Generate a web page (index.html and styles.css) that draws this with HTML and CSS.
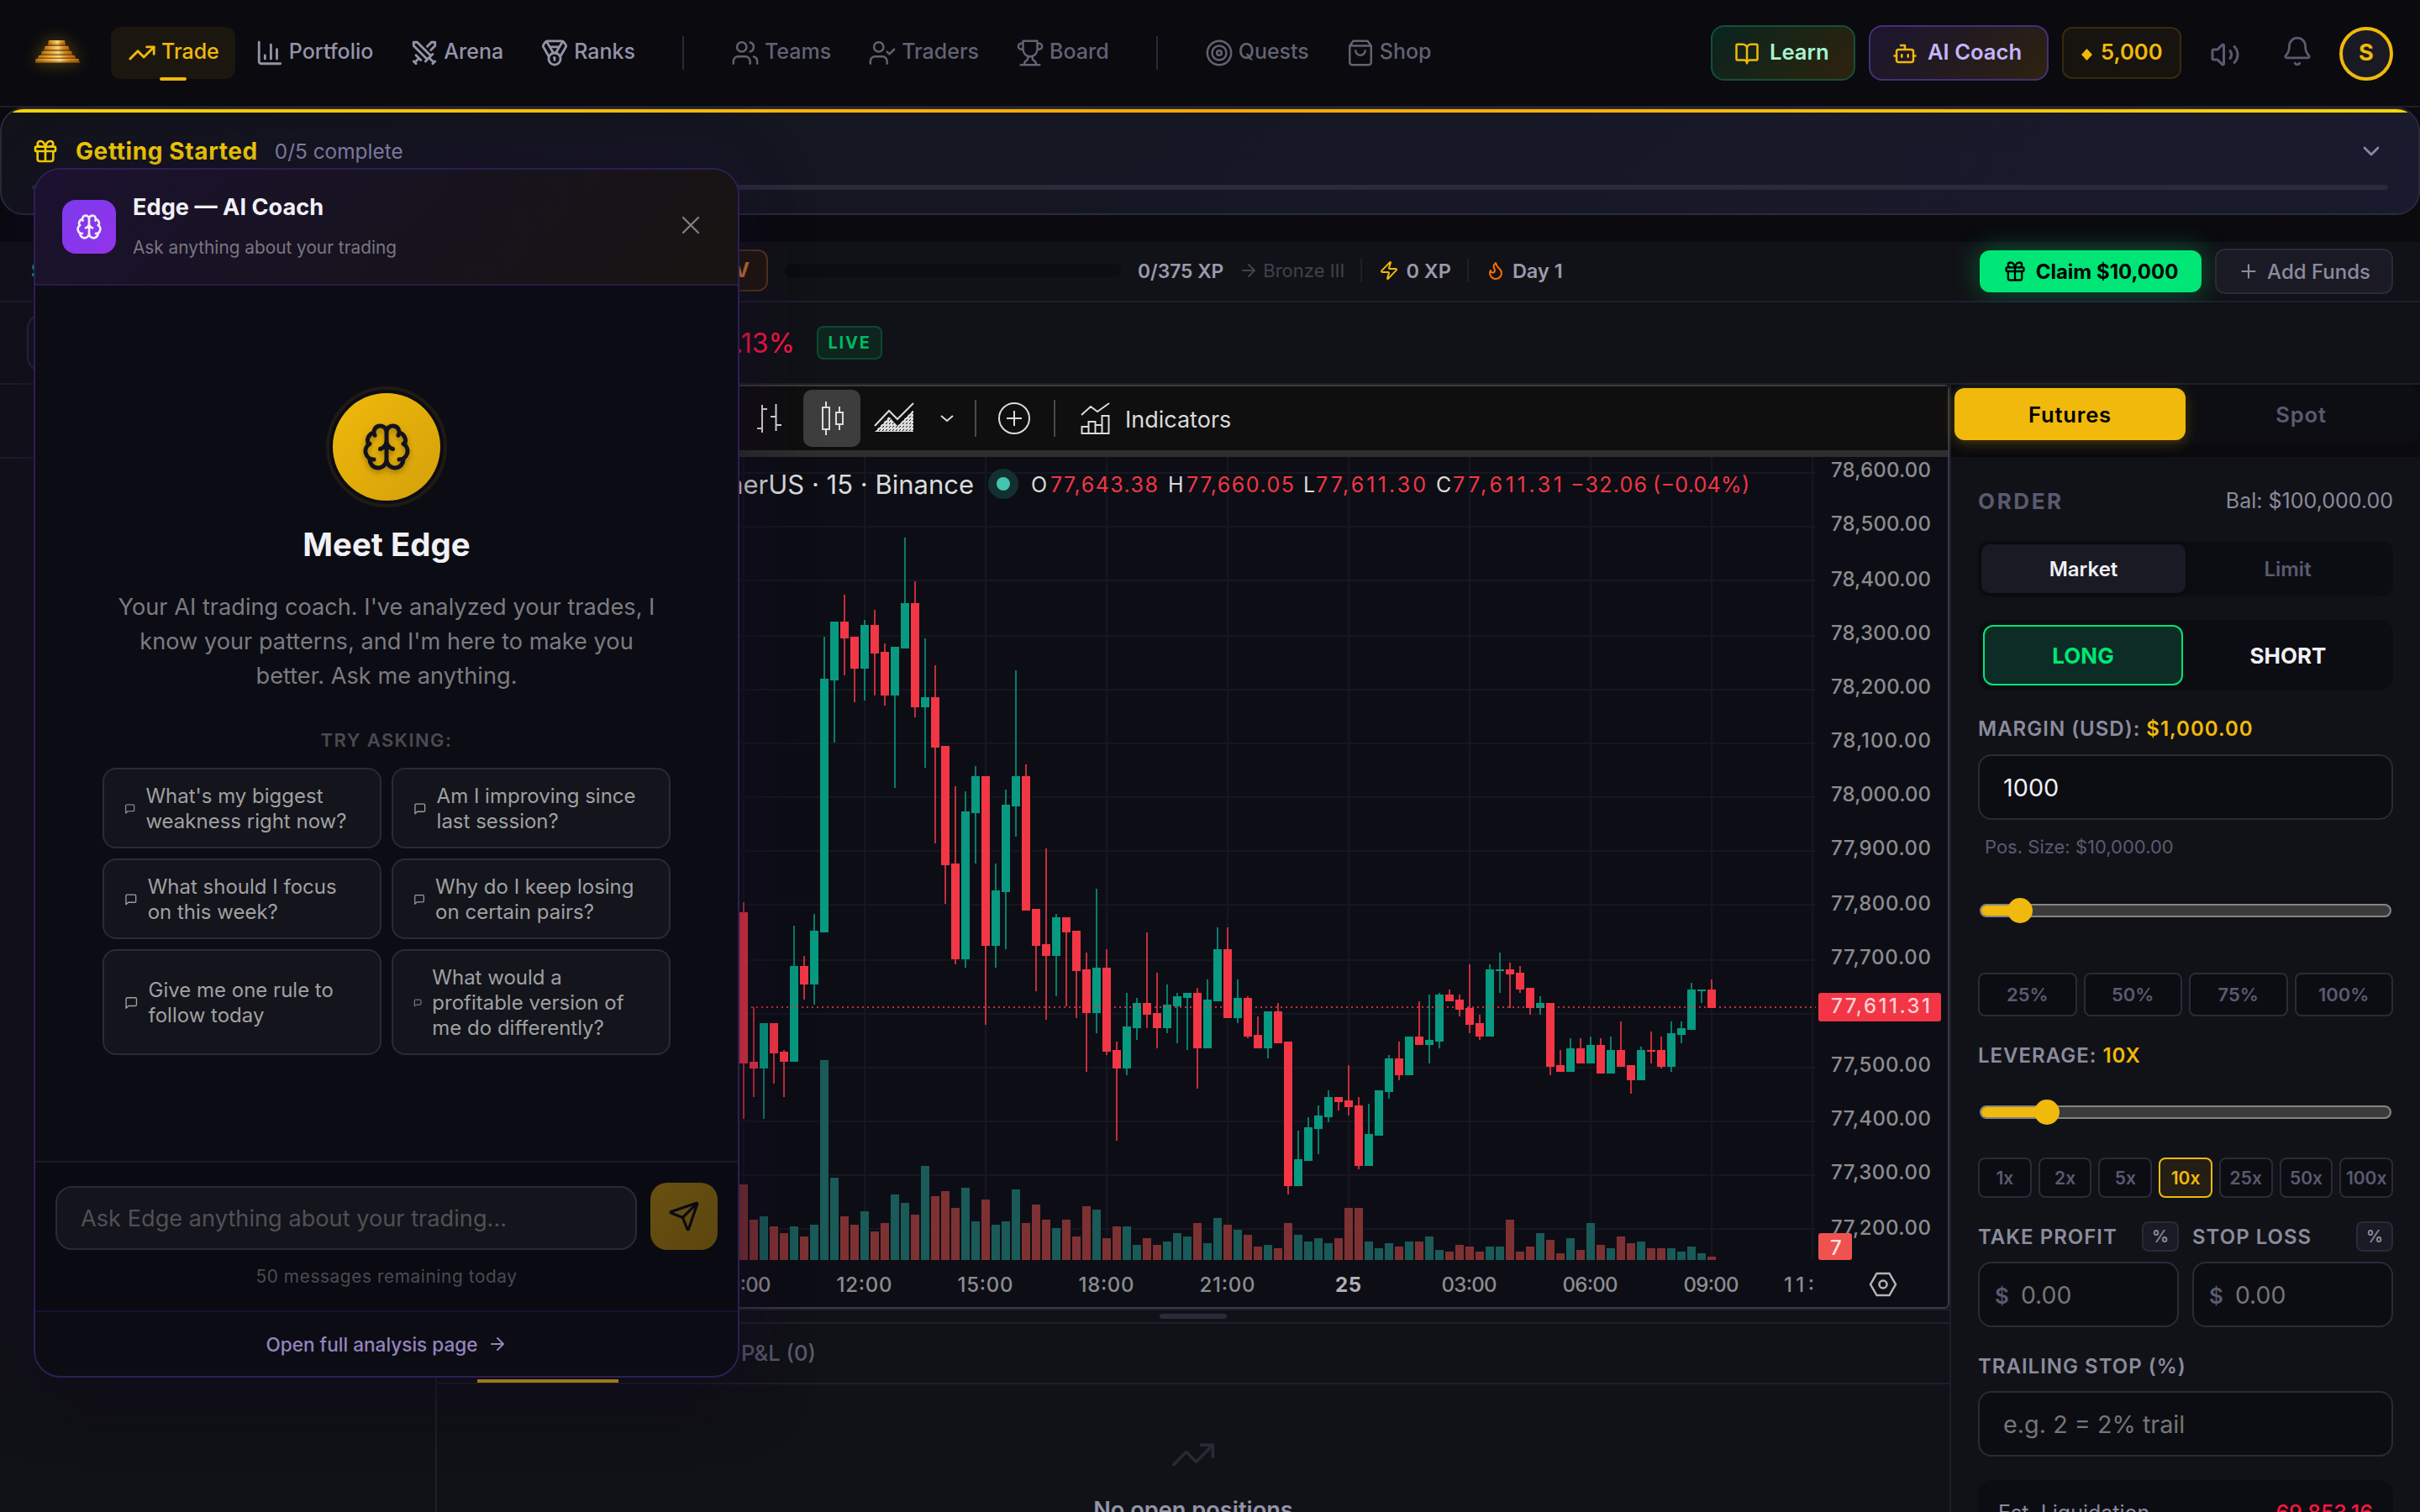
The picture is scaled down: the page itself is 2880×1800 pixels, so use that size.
FILE: index.html
```html
<!DOCTYPE html>
<html lang="en">
<head>
  <meta charset="UTF-8" />
  <meta name="viewport" content="width=device-width, initial-scale=1.0"/>
  <title>Trade</title>
  <link rel="stylesheet" href="styles.css">
</head>
<body>

  <!-- Icon set -->
  <svg class="icon-defs" width="0" height="0">
    <symbol id="i-trend" viewBox="0 0 24 24"><path d="M22 7l-8.5 8.5-5-5L2 17"/><path d="M16 7h6v6"/></symbol>
    <symbol id="i-bars" viewBox="0 0 24 24"><path d="M3 3v16a2 2 0 0 0 2 2h16"/><path d="M18 17V9M13 17V5M8 17v-3"/></symbol>
    <symbol id="i-swords" viewBox="0 0 24 24"><path d="M14.5 17.5L3 6V3h3l11.5 11.5M13 19l6-6M16 16l4 4M19 21l2-2M14.5 6.5L18 3h3v3l-3.5 3.5M5 14l4 4M7 17l-3 3M3 19l2 2"/></symbol>
    <symbol id="i-medal" viewBox="0 0 24 24"><path d="M7.21 15 2.66 7.14a2 2 0 0 1 .13-2.2L4.4 2.8A2 2 0 0 1 6 2h12a2 2 0 0 1 1.6.8l1.6 2.14a2 2 0 0 1 .14 2.2L16.79 15"/><path d="M11 12 5.12 2.2M13 12l5.88-9.8M8 7h8"/><circle cx="12" cy="17" r="5"/><path d="M12 18v-2h-.5"/></symbol>
    <symbol id="i-users" viewBox="0 0 24 24"><path d="M16 21v-2a4 4 0 0 0-4-4H6a4 4 0 0 0-4 4v2"/><circle cx="9" cy="7" r="4"/><path d="M22 21v-2a4 4 0 0 0-3-3.87M16 3.13a4 4 0 0 1 0 7.75"/></symbol>
    <symbol id="i-usercheck" viewBox="0 0 24 24"><path d="M16 21v-2a4 4 0 0 0-4-4H6a4 4 0 0 0-4 4v2"/><circle cx="9" cy="7" r="4"/><path d="M16 11l2 2 4-4"/></symbol>
    <symbol id="i-trophy" viewBox="0 0 24 24"><path d="M6 9H4.5a2.5 2.5 0 0 1 0-5H6M18 9h1.5a2.5 2.5 0 0 0 0-5H18M4 22h16M10 14.66V17c0 .55-.47.98-.97 1.21C7.85 18.75 7 20.24 7 22M14 14.66V17c0 .55.47.98.97 1.21C16.15 18.75 17 20.24 17 22M18 2H6v7a6 6 0 0 0 12 0V2Z"/></symbol>
    <symbol id="i-target" viewBox="0 0 24 24"><circle cx="12" cy="12" r="10"/><circle cx="12" cy="12" r="6"/><circle cx="12" cy="12" r="2"/></symbol>
    <symbol id="i-bag" viewBox="0 0 24 24"><path d="M6 2 3 6v14a2 2 0 0 0 2 2h14a2 2 0 0 0 2-2V6l-3-4ZM3 6h18M16 10a4 4 0 0 1-8 0"/></symbol>
    <symbol id="i-book" viewBox="0 0 24 24"><path d="M12 7v14M3 18a1 1 0 0 1-1-1V4a1 1 0 0 1 1-1h5a4 4 0 0 1 4 4 4 4 0 0 1 4-4h5a1 1 0 0 1 1 1v13a1 1 0 0 1-1 1h-6a3 3 0 0 0-3 3 3 3 0 0 0-3-3z"/></symbol>
    <symbol id="i-bot" viewBox="0 0 24 24"><path d="M12 8V4H8"/><rect x="4" y="8" width="16" height="12" rx="2"/><path d="M2 14h2M20 14h2M15 13v2M9 13v2"/></symbol>
    <symbol id="i-volume" viewBox="0 0 24 24"><path d="M11 4.702a.705.705 0 0 0-1.203-.498L6.413 7.587A1.4 1.4 0 0 1 5.416 8H3a1 1 0 0 0-1 1v6a1 1 0 0 0 1 1h2.416a1.4 1.4 0 0 1 .997.413l3.383 3.384A.705.705 0 0 0 11 19.298zM16 9a5 5 0 0 1 0 6M19.364 18.364a9 9 0 0 0 0-12.728"/></symbol>
    <symbol id="i-bell" viewBox="0 0 24 24"><path d="M10.268 21a2 2 0 0 0 3.464 0M3.262 15.326A1 1 0 0 0 4 17h16a1 1 0 0 0 .74-1.673C19.41 13.956 18 12.499 18 8A6 6 0 0 0 6 8c0 4.499-1.411 5.956-2.738 7.326"/></symbol>
    <symbol id="i-gift" viewBox="0 0 24 24"><rect x="3" y="8" width="18" height="4" rx="1"/><path d="M12 8v13M19 12v7a2 2 0 0 1-2 2H7a2 2 0 0 1-2-2v-7M7.5 8a2.5 2.5 0 0 1 0-5A4.8 8 0 0 1 12 8a4.8 8 0 0 1 4.5-5 2.5 2.5 0 0 1 0 5"/></symbol>
    <symbol id="i-brain" viewBox="0 0 24 24"><path d="M12 18V5M15 13a4.17 4.17 0 0 1-3-4 4.17 4.17 0 0 1-3 4M17.598 6.5A3 3 0 1 0 12 5a3 3 0 1 0-5.598 1.5M17.997 5.125a4 4 0 0 1 2.526 5.77M18 18a4 4 0 0 0 2-7.464M19.967 17.483A4 4 0 1 1 12 18a4 4 0 1 1-7.967-.517M6 18a4 4 0 0 1-2-7.464M6.003 5.125a4 4 0 0 0-2.526 5.77"/></symbol>
    <symbol id="i-msg" viewBox="0 0 24 24"><path d="M21 15a2 2 0 0 1-2 2H7l-4 4V5a2 2 0 0 1 2-2h14a2 2 0 0 1 2 2z"/></symbol>
    <symbol id="i-send" viewBox="0 0 24 24"><path d="M14.536 21.686a.5.5 0 0 0 .937-.024l6.5-19a.496.496 0 0 0-.635-.635l-19 6.5a.5.5 0 0 0-.024.937l7.93 3.18a2 2 0 0 1 1.112 1.11zM21.854 2.147l-10.94 10.939"/></symbol>
    <symbol id="i-zap" viewBox="0 0 24 24"><path d="M4 14a1 1 0 0 1-.78-1.63l9.9-10.2a.5.5 0 0 1 .86.46l-1.92 6.02A1 1 0 0 0 13 10h7a1 1 0 0 1 .78 1.63l-9.9 10.2a.5.5 0 0 1-.86-.46l1.92-6.02A1 1 0 0 0 11 14z"/></symbol>
    <symbol id="i-flame" viewBox="0 0 24 24"><path d="M8.5 14.5A2.5 2.5 0 0 0 11 12c0-1.38-.5-2-1-3-1.072-2.143-.224-4.054 2-6 .5 2.5 2 4.9 4 6.5 2 1.6 3 3.5 3 5.5a7 7 0 1 1-14 0c0-1.153.433-2.294 1-3a2.5 2.5 0 0 0 2.5 2.5z"/></symbol>
    <symbol id="i-x" viewBox="0 0 24 24"><path d="M18 6 6 18M6 6l12 12"/></symbol>
    <symbol id="i-plus" viewBox="0 0 24 24"><path d="M5 12h14M12 5v14"/></symbol>
    <symbol id="i-down" viewBox="0 0 24 24"><path d="M6 9l6 6 6-6"/></symbol>
    <symbol id="i-right" viewBox="0 0 24 24"><path d="M5 12h14M12 5l7 7-7 7"/></symbol>
  </svg>

  <!-- Top navigation -->
  <header class="top-nav">
    <a class="logo" href="#">
      <svg width="56" height="32" viewBox="0 0 56 32">
        <defs>
          <linearGradient id="gold" x1="0" y1="0" x2="1" y2="0">
            <stop offset="0" stop-color="#a86508"/><stop offset=".3" stop-color="#f0a92c"/>
            <stop offset=".55" stop-color="#ffdf86"/><stop offset=".75" stop-color="#d88a1a"/><stop offset="1" stop-color="#a05a08"/>
          </linearGradient>
          <linearGradient id="shade" x1="0" y1="0" x2="0" y2="1">
            <stop offset="0" stop-color="#ffe9a0" stop-opacity=".3"/><stop offset=".4" stop-color="#6b3504" stop-opacity="0"/>
            <stop offset="1" stop-color="#4a2202" stop-opacity=".75"/>
          </linearGradient>
        </defs>
        <g fill="url(#gold)">
          <path d="M18 1h19l1.500 7h-22z"/><path d="M13.500 8h28l1.500 6h-31z"/><path d="M10 14h35l1.500 5h-38z"/><path d="M6 19h43l1.500 4h-46z"/><path d="M2.500 23h51l1.500 5H2z"/>
        </g>
        <g fill="url(#shade)">
          <path d="M18 1h19l1.500 7h-22z"/><path d="M13.500 8h28l1.500 6h-31z"/><path d="M10 14h35l1.500 5h-38z"/><path d="M6 19h43l1.500 4h-46z"/><path d="M2.500 23h51l1.500 5H2z"/>
        </g>
      </svg>
    </a>
    <nav class="nav-links">
      <a class="nav-item active"><svg class="icon"><use href="#i-trend"/></svg><span>Trade</span></a>
      <a class="nav-item"><svg class="icon"><use href="#i-bars"/></svg><span>Portfolio</span></a>
      <a class="nav-item"><svg class="icon"><use href="#i-swords"/></svg><span>Arena</span></a>
      <a class="nav-item"><svg class="icon"><use href="#i-medal"/></svg><span>Ranks</span></a>
      <i class="nav-sep"></i>
      <a class="nav-item dim"><svg class="icon"><use href="#i-users"/></svg><span>Teams</span></a>
      <a class="nav-item dim"><svg class="icon"><use href="#i-usercheck"/></svg><span>Traders</span></a>
      <a class="nav-item dim"><svg class="icon"><use href="#i-trophy"/></svg><span>Board</span></a>
      <i class="nav-sep"></i>
      <a class="nav-item dim"><svg class="icon"><use href="#i-target"/></svg><span>Quests</span></a>
      <a class="nav-item dim"><svg class="icon"><use href="#i-bag"/></svg><span>Shop</span></a>
    </nav>
    <div class="nav-right">
      <button class="pill learn"><svg class="icon"><use href="#i-book"/></svg><span>Learn</span></button>
      <button class="pill coach"><svg class="icon"><use href="#i-bot"/></svg><span>AI Coach</span></button>
      <button class="coins"><i class="gem"></i><span>5,000</span></button>
      <svg class="icon volume"><use href="#i-volume"/></svg>
      <svg class="icon bell"><use href="#i-bell"/></svg>
      <div class="avatar">S</div>
    </div>
  </header>

  <!-- Onboarding banner -->
  <section class="getting-started">
    <div class="gs-row">
      <svg class="icon"><use href="#i-gift"/></svg>
      <h2>Getting Started</h2>
      <span>0/5 complete</span>
      <svg class="icon chevron"><use href="#i-down"/></svg>
    </div>
    <div class="gs-progress"></div>
  </section>

  <!-- Account status -->
  <section class="status-bar">
    <span class="balance">$100,000.00</span>
    <span class="rank">BRONZE IV</span>
    <span class="xp-bar"></span>
    <b class="xp">0/375 XP</b>
    <span class="next"><svg class="icon"><use href="#i-right"/></svg>Bronze III</span>
    <span class="stat zap"><svg class="icon"><use href="#i-zap"/></svg>0 XP</span>
    <span class="stat day"><svg class="icon"><use href="#i-flame"/></svg>Day 1</span>
    <div class="fund-btns">
      <button class="claim"><svg class="icon"><use href="#i-gift"/></svg>Claim $10,000</button>
      <button class="add"><svg class="icon"><use href="#i-plus"/></svg>Add Funds</button>
    </div>
  </section>

  <section class="ticker">
    <div class="pair"></div>
    <span class="change">-1.13%</span>
    <span class="live">LIVE</span>
  </section>

  <main class="workspace">
    <aside class="left-panel"><div class="left-head"></div></aside>

    <section class="center">
      <div class="chart">
        <div class="toolbar">
          <button class="tool"><svg width="40" height="40" viewBox="896 479 40 40"><path d="M907 483v33M907 488h6M901 511h6M923.500 482v32M917 497h6.500M923.500 507h6.500"/></svg></button>
          <button class="tool on"><svg width="40" height="40" viewBox="970 478 40 40"><path d="M979 485h8v26h-8zM983 478v7M983 511v7M995 491h8v14h-8zM999 484v7M999 505v7"/></svg></button>
          <button class="tool">
            <svg width="50" height="40" viewBox="1040 478 50 40">
              <defs><pattern id="hatch" width="4" height="4" patternUnits="userSpaceOnUse"><rect width="2" height="2" fill="#c8c8c8"/><rect x="2" y="2" width="2" height="2" fill="#c8c8c8"/></pattern></defs>
              <path d="M1042 507l17-18 10 10 19-19"/><path class="fill" d="M1042 514l17-18 10 11 19-19v26z"/>
            </svg>
          </button>
          <svg class="more" width="20" height="20" viewBox="0 0 20 20"><path d="M3 7l7 6 7-6"/></svg>
          <i class="tool-sep"></i>
          <svg class="compare" width="40" height="40" viewBox="0 0 40 40"><circle cx="20" cy="20" r="18"/><path d="M11 20h18M20 11v18"/></svg>
          <i class="tool-sep"></i>
          <svg class="ind" width="36" height="40" viewBox="1285 478 36 40"><path d="M1287 494l11-10 8 6 14-10M1287.500 508h8v8h-8zM1295.500 502h8v14h-8zM1303.500 506h8v10h-8zM1311.500 495h8v21h-8z"/></svg>
          <span class="ind-label">Indicators</span>
        </div>
        <svg id="plot" class="plot" viewBox="522 544 1796 1012"></svg>
      </div>
      <div class="resizer"><i></i></div>
      <div class="tabs">
        <span class="tab active">Positions (0)</span>
        <span class="tab">P&amp;L (0)</span>
      </div>
      <div class="empty">
        <svg class="icon"><use href="#i-trend"/></svg>
        <p>No open positions</p>
      </div>
    </section>

    <!-- Order form -->
    <aside class="order-panel">
      <div class="market-type"><div>
        <button class="on">Futures</button><button>Spot</button>
      </div></div>
      <div class="order-form">
        <div class="order-head"><h3>ORDER</h3><span>Bal: $100,000.00</span></div>
        <div class="order-type"><button class="on">Market</button><button>Limit</button></div>
        <div class="side"><button class="long">LONG</button><button>SHORT</button></div>
        <label class="field-label margin-label">MARGIN (USD): <b>$1,000.00</b></label>
        <div class="field">1000</div>
        <p class="pos-size">Pos. Size: $10,000.00</p>
        <div class="slider margin-slider"><i style="width:48px"></i></div>
        <div class="pct"><button>25%</button><button>50%</button><button>75%</button><button>100%</button></div>
        <label class="field-label lev-label">LEVERAGE: <b>10X</b></label>
        <div class="slider lev-slider"><i style="width:80px"></i></div>
        <div class="lev"><button>1x</button><button>2x</button><button>5x</button><button class="on">10x</button><button>25x</button><button>50x</button><button>100x</button></div>
        <div class="tpsl">
          <div>
            <div class="tpsl-head"><label class="field-label">TAKE PROFIT</label><button>%</button></div>
            <div class="field price"><b>$</b>0.00</div>
          </div>
          <div>
            <div class="tpsl-head"><label class="field-label">STOP LOSS</label><button>%</button></div>
            <div class="field price"><b>$</b>0.00</div>
          </div>
        </div>
        <label class="field-label trail-label">TRAILING STOP (%)</label>
        <div class="field hint">e.g. 2 = 2% trail</div>
        <div class="summary"><span>Est. Liquidation</span><b>69,853.16</b></div>
      </div>
    </aside>
  </main>

  <!-- AI coach popup -->
  <div class="coach-modal">
    <div class="coach-head">
      <div class="coach-icon"><svg class="icon"><use href="#i-brain"/></svg></div>
      <div class="coach-title"><h2>Edge — AI Coach</h2><p>Ask anything about your trading</p></div>
      <svg class="icon close"><use href="#i-x"/></svg>
    </div>
    <div class="coach-body">
      <div class="orb"><svg class="icon"><use href="#i-brain"/></svg></div>
      <h1>Meet Edge</h1>
      <p class="intro">Your AI trading coach. I've analyzed your trades, I know your patterns, and I'm here to make you better. Ask me anything.</p>
      <p class="try">TRY ASKING:</p>
      <div class="prompts">
        <button><svg class="icon"><use href="#i-msg"/></svg><span>What's my biggest weakness right now?</span></button>
        <button><svg class="icon"><use href="#i-msg"/></svg><span>Am I improving since last session?</span></button>
        <button><svg class="icon"><use href="#i-msg"/></svg><span>What should I focus on this week?</span></button>
        <button><svg class="icon"><use href="#i-msg"/></svg><span>Why do I keep losing on certain pairs?</span></button>
        <button><svg class="icon"><use href="#i-msg"/></svg><span>Give me one rule to follow today</span></button>
        <button><svg class="icon"><use href="#i-msg"/></svg><span>What would a profitable version of me do differently?</span></button>
      </div>
    </div>
    <div class="coach-input">
      <div class="ask-row">
        <div class="ask">Ask Edge anything about your trading...</div>
        <button class="send"><svg class="icon"><use href="#i-send"/></svg></button>
      </div>
      <p>50 messages remaining today</p>
    </div>
    <a class="coach-link">Open full analysis page <svg class="icon"><use href="#i-right"/></svg></a>
  </div>

  <script src="chart.js"></script>
</body>
</html>
```

FILE: styles.css
```css
* {
  box-sizing: border-box;
  margin: 0;
  padding: 0;
}

body {
  position: relative;
  width: 2880px;
  height: 1800px;
  overflow: hidden;
  display: flex;
  flex-direction: column;
  font-family: Inter, sans-serif;
  background: #0a0a0f;
  color: #f0f0f5;
}

button {
  font: inherit;
  color: inherit;
  background: none;
  border: none;
}

.icon-defs { position: absolute; }

.icon {
  width: 34px;
  height: 34px;
  flex-shrink: 0;
  fill: none;
  stroke: currentColor;
  stroke-width: 2;
  stroke-linecap: round;
  stroke-linejoin: round;
}

/* ===== TOP NAV ===== */
.top-nav {
  height: 128px;
  flex-shrink: 0;
  display: flex;
  align-items: center;
  padding: 0 32px 0 40px;
  border-bottom: 2px solid #1e1e2e;
}

.logo {
  width: 92px;
  height: 32px;
}

.logo svg { filter: drop-shadow(0 0 10px rgba(240, 185, 11, 0.35)); }

.nav-links {
  display: flex;
  align-items: center;
  gap: 4px;
}

.nav-item {
  position: relative;
  display: flex;
  align-items: center;
  gap: 6px;
  height: 62px;
  padding: 0 20px;
  border-radius: 12px;
  font-size: 25px;
  font-weight: 500;
  color: #9494a8;
}

.nav-item span, .pill span, .coins span { padding-bottom: 4px; }

.nav-item.dim { color: #626272; }
.nav-item.dim .icon { stroke-width: 1.75; }

.nav-item.active {
  padding-right: 19px;
  color: #f0b90b;
  background: #1b170f;
}

.nav-item.active::after {
  content: "";
  position: absolute;
  left: 58px;
  bottom: -2px;
  width: 32px;
  height: 4px;
  border-radius: 2px;
  background: #f0b90b;
}

.nav-sep {
  width: 2px;
  height: 40px;
  margin: 0 32px;
  background: #2a2a3a;
}

.nav-right {
  margin-left: auto;
  display: flex;
  align-items: center;
}

.pill {
  display: flex;
  align-items: center;
  height: 66px;
  padding: 0 26px;
  border: 2px solid;
  border-radius: 16px;
  font-size: 25.6px;
  font-weight: 600;
  margin-right: 16px;
}

.pill .icon {
  width: 30px;
  height: 30px;
  margin-right: 12px;
  margin-top: 2px;
  color: #f0b90b;
}

.learn {
  width: 172px;
  color: #a7f3d0;
  border-color: #145038;
  background: linear-gradient(135deg, #0a2420, #1f2412 60%, #30210f);
}

.coach {
  width: 214px;
  color: #c4b5fd;
  border-color: #43307a;
  background: linear-gradient(135deg, #1c1530, #231b1f 50%, #2f2210);
}

.coins {
  display: flex;
  align-items: center;
  width: 142px;
  height: 62px;
  padding-left: 21px;
  border: 2px solid #352b10;
  border-radius: 12px;
  background: #17130e;
  font-size: 25.6px;
  font-weight: 600;
  color: #f0b90b;
}

.gem {
  width: 13px;
  height: 14px;
  margin: 4px 10px 0 0;
  background: #f0b90b;
  clip-path: polygon(50% 0, 100% 50%, 50% 100%, 0 50%);
}

.volume {
  width: 36px;
  height: 36px;
  margin: 4px 0 0 34px;
  color: #5a5a70;
}

.bell {
  width: 38px;
  height: 38px;
  margin: -4px 0 0 49px;
  color: #5a5a70;
  stroke-width: 1.75;
}

.avatar {
  width: 64px;
  height: 64px;
  margin: 2px 0 0 31px;
  border: 4px solid #f0b90b;
  border-radius: 50%;
  background: #1a1a24;
  color: #f0b90b;
  font-size: 27.2px;
  font-weight: 700;
  line-height: 54px;
  text-align: center;
}

/* ===== GETTING STARTED ===== */
.getting-started {
  position: relative;
  height: 128px;
  flex-shrink: 0;
  margin-bottom: 32px;
  padding: 34px 36px 0;
  border: 2px solid #2a2a3a;
  border-radius: 28px;
  overflow: hidden;
  background: linear-gradient(135deg, #12141a, #1a1a2e);
}

.getting-started::before {
  content: "";
  position: absolute;
  left: 0;
  top: 0;
  right: 0;
  height: 4px;
  background: linear-gradient(90deg, #ffd700, #ffa500, #ffd700);
}

.gs-row {
  display: flex;
  align-items: center;
  height: 32px;
  color: #ffd700;
}

.gs-row .icon {
  width: 32px;
  height: 32px;
  margin-right: 20px;
}

.gs-row h2 {
  font-size: 28px;
  font-weight: 700;
  letter-spacing: 0.6px;
}

.gs-row span {
  margin-left: 20px;
  font-size: 24.4px;
  color: #8888aa;
}

.gs-row .chevron {
  margin: 0 4px 0 auto;
  color: #8888aa;
}

.gs-progress {
  height: 6px;
  margin-top: 24px;
  border-radius: 3px;
  background: #2a2a3a;
}

/* ===== STATUS BAR ===== */
.status-bar {
  height: 72px;
  flex-shrink: 0;
  display: flex;
  align-items: center;
  padding: 0 32px 2px 37px;
  border-bottom: 2px solid #1e1e2e;
  background: #111217;
  font-size: 24px;
}

.balance {
  width: 679px;
  font-weight: 600;
  color: #00e676;
}

.rank {
  width: 198px;
  height: 50px;
  padding-right: 20px;
  border: 2px solid #54351c;
  border-radius: 12px;
  background: #21170f;
  color: #cd7f32;
  font-weight: 700;
  line-height: 45px;
  text-align: right;
}

.xp-bar {
  width: 400px;
  height: 16px;
  margin: 0 20px 0 20px;
  border-radius: 8px;
  background: #0c0d11;
}

.xp, .stat {
  font-weight: 600;
  color: #9a9aae;
}

.xp { font-size: 22.8px; }

.next {
  display: flex;
  align-items: center;
  margin-left: 18px;
  font-size: 22px;
  color: #41414f;
}

.next .icon {
  width: 24px;
  height: 24px;
  margin-right: 5px;
}

.stat {
  display: flex;
  align-items: center;
  height: 28px;
  margin-left: 19px;
  padding-left: 20px;
  border-left: 2px solid #1e1e2e;
  font-size: 23.500px;
}

.stat .icon {
  width: 24px;
  height: 24px;
  margin-right: 8px;
}

.zap .icon { color: #f0b90b; }
.day .icon { color: #ff6d00; }

.fund-btns {
  margin-left: auto;
  display: flex;
  align-items: center;
  gap: 16px;
}

.claim, .add {
  display: flex;
  align-items: center;
  justify-content: center;
}

.claim {
  width: 264px;
  height: 50px;
  margin-top: 2px;
  border-radius: 12px;
  background: #00e676;
  color: #000;
  font-weight: 700;
  box-shadow: 0 0 32px rgba(0, 230, 118, 0.35);
}

.claim .icon {
  width: 28px;
  height: 28px;
  margin-right: 11px;
}

.add {
  width: 212px;
  height: 54px;
  margin-top: 2px;
  border: 2px solid #2a2a3a;
  border-radius: 12px;
  background: #1a1a24;
  color: #8b8b9e;
  font-weight: 500;
}

.add .icon {
  width: 26px;
  height: 26px;
  margin-right: 9px;
}

/* ===== TICKER ===== */
.ticker {
  height: 98px;
  flex-shrink: 0;
  display: flex;
  align-items: center;
  padding-left: 32px;
  border-bottom: 2px solid #1e1e2e;
  background: #111217;
}

.pair {
  width: 420px;
  height: 72px;
  border: 2px solid #2a2a3a;
  border-radius: 20px;
  background: #15151d;
}

.change {
  width: 494px;
  text-align: right;
  font-size: 32px;
  color: #ff1744;
}

.live {
  margin-left: 26px;
  width: 78px;
  height: 40px;
  border: 2px solid #0d4a31;
  border-radius: 8px;
  background: #0e241f;
  color: #00b862;
  font-size: 20px;
  font-weight: 700;
  letter-spacing: 1.8px;
  line-height: 36px;
  text-align: center;
}

/* ===== WORKSPACE ===== */
.workspace {
  display: flex;
  height: 1342px;
}

.left-panel {
  width: 520px;
  border-right: 2px solid #1e1e2e;
  background: #111217;
}

.left-head {
  height: 88px;
  border-bottom: 2px solid #1e1e2e;
}

.center {
  width: 1800px;
  background: #111217;
}

.chart {
  height: 1100px;
  border: 2px solid #3a3a3c;
  border-radius: 0 6px 6px 0;
  background: #0d0e15;
}

.toolbar {
  display: flex;
  align-items: center;
  height: 84px;
  padding-left: 360px;
  border-bottom: 8px solid #2e2e2e;
  background: #0f0f0f;
}

.toolbar svg {
  fill: none;
  stroke: #dbdbdb;
  stroke-width: 2;
}

.toolbar .fill {
  fill: url(#hatch);
  stroke: none;
}

.tool {
  display: flex;
  align-items: center;
  justify-content: center;
  width: 68px;
  height: 68px;
  margin-right: 6px;
  border-radius: 10px;
}

.tool.on { background: #3d3d3d; }

.more { margin: 0 23px 0 13px; }

.tool-sep {
  width: 2px;
  height: 44px;
  background: #4a4a4a;
}

.compare { margin: 0 27px 0 25px; }
.ind { margin: 0 18px 0 29px; }

.ind-label {
  padding-top: 3px;
  font-size: 27px;
  color: #dbdbdb;
}

.plot {
  display: block;
  width: 1796px;
  height: 1012px;
  font-family: Inter, sans-serif;
}

.plot .grid { stroke: #15161f; stroke-width: 2; }
.plot .up { fill: #089981; }
.plot .down { fill: #f23645; }
.plot .vol.up { fill: #1a5a58; }
.plot .vol.down { fill: #7e3133; }
.plot .axis { fill: #8c8c90; font-size: 24px; font-weight: 500; }
.plot .axis.day { font-weight: 700; fill: #b0b0b4; }
.plot .name { fill: #dbdbdb; font-size: 31px; }
.plot .key { fill: #dbdbdb; font-size: 25px; }
.plot .val { fill: #f23645; font-size: 25px; }

.resizer {
  height: 18px;
  padding-top: 4px;
  border-top: 2px solid #1e1e2e;
  border-bottom: 2px solid #1e1e2e;
}

.resizer i {
  display: block;
  width: 80px;
  height: 6px;
  margin: 0 auto;
  border-radius: 3px;
  background: #2a2a3a;
}

.tabs {
  display: flex;
  height: 72px;
  padding-left: 48px;
  border-bottom: 2px solid #1e1e2e;
}

.tab {
  margin-right: 146px;
  font-size: 25.6px;
  font-weight: 500;
  line-height: 70px;
  color: #5a5a70;
}

.tab.active {
  width: 168px;
  border-bottom: 4px solid #f0b90b;
  color: #f0b90b;
  font-size: 24px;
  white-space: nowrap;
}

.empty {
  padding-top: 56px;
  text-align: center;
}

.empty .icon {
  width: 56px;
  height: 56px;
  color: #2a2a36;
  stroke-width: 1.5;
}

.empty p {
  margin-top: 17px;
  font-size: 27.2px;
  font-weight: 600;
  color: #9494a8;
}

/* ===== ORDER PANEL ===== */
.order-panel {
  width: 560px;
  border-left: 2px solid #1e1e2e;
  background: #111217;
}

.market-type {
  height: 86px;
  background: #0a0a0f;
}

.market-type div {
  display: flex;
  height: 70px;
  padding: 4px;
  border-radius: 16px;
  background: #0d0e13;
}

.market-type button {
  flex: 1;
  border-radius: 12px;
  font-size: 25.6px;
  font-weight: 600;
  letter-spacing: 0.8px;
  color: #5a5a70;
}

.market-type .on {
  background: #f0b90b;
  color: #000;
  box-shadow: 0 4px 16px rgba(240, 185, 11, 0.25);
}

.order-form { padding: 32px 32px 0; }

.order-head {
  display: flex;
  align-items: center;
  justify-content: space-between;
  height: 40px;
  font-size: 25px;
  color: #8b8b9e;
}

.order-head h3 {
  font-size: 26px;
  font-weight: 700;
  letter-spacing: 2.6px;
  color: #5a5a70;
}

.order-type, .side {
  display: flex;
  margin-top: 28px;
  background: #0c0d12;
}

.order-type {
  height: 66px;
  padding: 4px;
  border-radius: 14px;
}

.order-type button {
  flex: 1;
  border-radius: 10px;
  font-size: 24px;
  font-weight: 600;
  color: #5a5a70;
}

.order-type .on {
  background: #1a1a24;
  color: #f0f0f5;
  box-shadow: 0 2px 8px rgba(0, 0, 0, 0.3);
}

.side {
  gap: 6px;
  height: 84px;
  padding: 6px;
  border-radius: 16px;
}

.side button {
  flex: 1;
  border: 2px solid transparent;
  border-radius: 12px;
  font-size: 26px;
  font-weight: 700;
}

.side .long {
  border-color: #00e676;
  background: #0d2c25;
  color: #00e676;
}

.field-label {
  display: block;
  height: 28px;
  font-size: 24px;
  font-weight: 600;
  line-height: 29px;
  letter-spacing: 1px;
  color: #8b8b9e;
}

.field-label b {
  font-weight: 600;
  color: #f0b90b;
}

.margin-label { margin-top: 31px; }
.lev-label { margin-top: 32px; }
.trail-label { margin-top: 32px; }

.field {
  height: 78px;
  margin-top: 17px;
  padding-left: 28px;
  border: 2px solid #2a2a3a;
  border-radius: 16px;
  background: #0c0d12;
  font-size: 28.8px;
  line-height: 75px;
}

.pos-size {
  height: 24px;
  margin: 20px 0 0 8px;
  font-size: 22px;
  line-height: 24px;
  color: #5a5a70;
}

.slider {
  height: 16px;
  margin: 0 2px;
  border: 2px solid #858585;
  border-radius: 8px;
  background: #3b3b3b;
}

.slider i {
  position: relative;
  display: block;
  height: 12px;
  border-radius: 6px;
  background: #f0b90b;
}

.slider i::after {
  content: "";
  position: absolute;
  right: -13px;
  top: -9px;
  width: 30px;
  height: 30px;
  border-radius: 50%;
  background: #f0b90b;
}

.margin-slider { margin-top: 56px; }
.lev-slider { margin-top: 46px; }

.pct, .lev {
  display: flex;
  gap: 8px;
}

.pct { margin-top: 66px; }
.lev { margin-top: 46px; }

.pct button, .lev button {
  flex: 1 1 0;
  min-width: 0;
  height: 52px;
  border: 2px solid #2a2a3a;
  border-radius: 8px;
  background: #0c0d12;
  color: #5a5a70;
  font-size: 22px;
  font-weight: 600;
}

.lev button {
  height: 48px;
  font-size: 21px;
}

.lev .on {
  border-color: #f0b90b;
  background: #241e14;
  color: #f0b90b;
}

.tpsl {
  display: flex;
  gap: 16px;
  margin-top: 28px;
}

.tpsl > div { flex: 1; }

.tpsl-head {
  display: flex;
  align-items: center;
  justify-content: space-between;
  height: 36px;
}

.tpsl-head button {
  width: 44px;
  height: 36px;
  border: 2px solid #2a2a3a;
  border-radius: 8px;
  background: #1a1a24;
  color: #8b8b9e;
  font-size: 20px;
  font-weight: 600;
}

.price {
  margin-top: 12px;
  padding-left: 18px;
  color: #757575;
  font-size: 28.4px;
}

.price b {
  margin-right: 14px;
  font-size: 26px;
  font-weight: 600;
  color: #5a5a70;
}

.trail-label + .field { margin-top: 16px; }
.hint { color: #757575; }

.summary {
  display: flex;
  justify-content: space-between;
  height: 38px;
  margin-top: 28px;
  padding: 23px 24px 0;
  border-radius: 16px 16px 0 0;
  background: #0c0d12;
  font-size: 25px;
  line-height: 32px;
  color: #8b8b9e;
}

.summary b {
  font-weight: 500;
  color: #ff1744;
}

/* ===== COACH MODAL ===== */
.coach-modal {
  position: absolute;
  left: 40px;
  top: 200px;
  width: 840px;
  height: 1440px;
  display: flex;
  flex-direction: column;
  border: 2px solid #2d1f55;
  border-radius: 32px;
  overflow: hidden;
  background: #0c0c14;
  box-shadow: 0 16px 80px rgba(0, 0, 0, 0.5), 0 0 80px rgba(124, 58, 237, 0.12);
}

.coach-head {
  display: flex;
  height: 138px;
  padding: 36px 32px 0;
  border-bottom: 2px solid #291b45;
  background: linear-gradient(135deg, #1c1130, #17131f 50%, #171411);
}

.coach-icon {
  display: flex;
  align-items: center;
  justify-content: center;
  width: 64px;
  height: 64px;
  margin-right: 20px;
  border-radius: 16px;
  background: linear-gradient(135deg, #7c3aed, #9333ea);
}

.coach-icon .icon {
  width: 32px;
  height: 32px;
}

.coach-title h2 {
  height: 34px;
  margin-top: -8px;
  font-size: 27.2px;
  font-weight: 700;
  line-height: 34px;
}

.coach-title p {
  margin-top: 17px;
  font-size: 20.8px;
  line-height: 27px;
  color: #7a7780;
}

.close {
  width: 36px;
  height: 36px;
  margin: 12px 6px 0 auto;
  color: #808084;
  stroke-width: 1.5;
}

.coach-body {
  height: 1042px;
  display: flex;
  flex-direction: column;
  align-items: center;
  padding-top: 128px;
}

.orb {
  position: relative;
  display: flex;
  align-items: center;
  justify-content: center;
  width: 128px;
  height: 128px;
  border-radius: 50%;
  background: linear-gradient(135deg, #f0b90b, #d4a00a);
  color: #12121c;
}

.orb::before {
  content: "";
  position: absolute;
  inset: -8px;
  border: 4px solid #1f1a13;
  border-radius: 50%;
}

.orb .icon {
  width: 60px;
  height: 60px;
  filter: drop-shadow(0 3px 3px rgba(0, 0, 0, 0.3));
}

.coach-body h1 {
  margin-top: 30px;
  font-size: 38.4px;
  font-weight: 700;
  line-height: 44px;
}

.intro {
  width: 660px;
  margin-top: 32px;
  font-size: 27.2px;
  line-height: 41px;
  text-align: center;
  color: #7b7b80;
}

.try {
  margin-top: 42px;
  font-size: 22px;
  font-weight: 600;
  line-height: 28px;
  letter-spacing: 1.4px;
  color: #4a4a50;
}

.prompts {
  display: grid;
  grid-template-columns: 332px 332px;
  gap: 12px;
  margin-top: 19px;
}

.prompts button {
  display: flex;
  align-items: center;
  gap: 12px;
  min-height: 96px;
  padding: 17px 24px 15px;
  border: 2px solid #2a2a3a;
  border-radius: 16px;
  background: #13141c;
  color: #a0a0a0;
  font-size: 24px;
  line-height: 30px;
  text-align: left;
}

.prompts .icon {
  width: 24px;
  height: 24px;
  flex-shrink: 1;
}

.coach-input {
  height: 178px;
  padding: 24px;
  border-top: 2px solid #1a1a28;
  background: #0a0a12;
}

.ask-row {
  display: flex;
  align-items: flex-end;
  gap: 16px;
}

.ask {
  flex: 1;
  height: 76px;
  padding-left: 28px;
  border: 2px solid #2a2a3a;
  border-radius: 20px;
  background: #13141c;
  color: #505054;
  font-size: 27.2px;
  line-height: 73px;
}

.send {
  display: flex;
  align-items: center;
  justify-content: center;
  width: 80px;
  height: 80px;
  border-radius: 20px;
  background: linear-gradient(135deg, #67500f, #5c460f);
  color: #0a0a0f;
}

.send .icon {
  width: 38px;
  height: 38px;
}

.coach-input p {
  margin-top: 17px;
  font-size: 20.8px;
  line-height: 29px;
  letter-spacing: 0.6px;
  text-align: center;
  color: #4b4b50;
}

.coach-link {
  display: flex;
  align-items: center;
  justify-content: center;
  height: 78px;
  border-top: 2px solid #1a1230;
  color: #9384bd;
  font-size: 22.6px;
  font-weight: 500;
}

.coach-link .icon {
  width: 24px;
  height: 24px;
  margin-left: 11px;
}
```

FILE: chart.js
```javascript
// each row: body top, body bottom, high, low, up (1) or down (0), volume top
const candles = [
  [1086,1266,1074,1332,0,1410],[1264,1272,1199,1306,0,1452],[1218,1272,1218,1332,1,1448],[1218,1254,1218,1290,0,1460],
  [1252,1264,1250,1306,0,1468],[1150,1264,1102,1264,1,1460],[1150,1172,1138,1190,0,1472],[1108,1172,1088,1196,1,1458],
  [808,1110,758,1110,1,1262],[740,810,740,884,1,1402],[740,760,708,804,0,1448],[758,796,758,836,0,1458],
  [744,796,738,834,1,1442],[744,778,726,828,0,1466],[776,828,766,840,0,1456],[770,828,770,938,1,1422],
  [718,772,640,772,1,1432],[718,842,692,854,0,1446],[830,842,760,914,1,1388],[830,890,792,1004,0,1424],
  [888,1030,888,1076,0,1418],[1028,1142,936,1148,0,1438],[966,1142,942,1152,1,1414],[924,968,912,1028,1,1454],
  [924,1126,924,1220,0,1428],[1060,1126,1028,1152,1,1458],[958,1062,940,1130,1,1454],[924,960,798,996,1,1416],
  [924,1084,910,1084,0,1456],[1082,1126,1082,1180,0,1434],[1124,1138,1010,1214,0,1452],[1092,1138,1088,1186,1,1462],
  [1092,1110,1092,1198,0,1452],[1108,1156,1108,1212,0,1472],[1154,1206,1134,1276,0,1436],[1152,1206,1058,1230,1,1440],
  [1152,1252,1130,1256,0,1474],[1250,1272,1240,1358,0,1460],[1222,1272,1182,1280,1,1460],[1194,1224,1188,1238,1,1482],
  [1194,1208,1110,1224,0,1474],[1206,1224,1158,1248,0,1482],[1196,1224,1172,1230,1,1478],[1186,1198,1182,1242,1,1468],
  [1182,1188,1182,1250,1,1472],[1182,1248,1176,1296,0,1456],[1190,1248,1166,1248,1,1480],[1130,1192,1104,1192,1,1450],
  [1130,1212,1104,1212,0,1458],[1188,1212,1166,1218,1,1464],[1188,1234,1186,1236,0,1470],[1232,1248,1210,1248,0,1484],
  [1204,1248,1204,1260,1,1482],[1204,1242,1194,1242,0,1486],[1240,1412,1240,1422,0,1456],[1380,1412,1346,1412,1,1470],
  [1342,1382,1330,1382,1,1478],[1328,1344,1316,1374,1,1474],[1306,1330,1298,1336,1,1480],[1306,1312,1306,1322,0,1474],
  [1310,1318,1268,1328,0,1438],[1316,1388,1306,1392,0,1438],[1350,1388,1314,1388,1,1478],[1298,1352,1298,1352,1,1486],
  [1260,1300,1256,1308,1,1480],[1260,1280,1240,1286,0,1484],[1234,1280,1234,1280,1,1478],[1234,1244,1192,1244,0,1478],
  [1238,1244,1184,1266,1,1472],[1184,1240,1182,1248,1,1488],[1184,1192,1178,1192,0,1490],[1190,1202,1184,1210,0,1482],
  [1200,1220,1148,1230,0,1484],[1218,1234,1208,1238,0,1490],[1154,1234,1148,1234,1,1484],[1154,1156,1134,1182,1,1484],
  [1154,1160,1146,1200,0,1452],[1158,1178,1150,1182,0,1490],[1176,1200,1176,1208,0,1484],[1194,1200,1186,1208,1,1468],
  [1194,1270,1194,1280,0,1476],[1268,1276,1250,1276,0,1492],[1248,1276,1236,1276,1,1474],[1248,1266,1236,1266,0,1488],
  [1244,1266,1234,1266,1,1456],[1244,1278,1236,1278,0,1482],[1250,1278,1234,1278,1,1486],[1250,1270,1216,1270,0,1472],
  [1268,1286,1268,1302,0,1480],[1250,1286,1246,1286,1,1478],[1250,1252,1228,1266,0,1486],[1250,1270,1234,1272,0,1486],
  [1230,1270,1216,1276,1,1486],[1224,1232,1216,1242,1,1490],[1178,1226,1170,1226,1,1484],[1178,1180,1178,1194,1,1492],
  [1178,1200,1166,1200,0,1496]
];

const startX = 885;
const step = 12;
const gridY = [563, 627, 691, 757, 821, 885, 949, 1013, 1077, 1143, 1207, 1271, 1335, 1399, 1463];
const labelY = [568, 632, 698, 762, 826, 890, 954, 1018, 1084, 1148, 1212, 1276, 1340, 1404, 1470];
const times = [['09:00', 885], ['12:00', 1029], ['15:00', 1173], ['18:00', 1317], ['21:00', 1461], ['25', 1605],
  ['03:00', 1749], ['06:00', 1893], ['09:00', 2037]];

let out = '';

function text(cls, x, y, str, len, anchor) {
  out += `<text class="${cls}" x="${x}" y="${y}"` + (len ? ` textLength="${len}"` : '') +
    (anchor ? ` text-anchor="${anchor}"` : '') + `>${str}</text>`;
}

// grid
gridY.forEach(y => { out += `<path class="grid" d="M522 ${y}H2161"/>`; });
times.forEach(t => { out += `<path class="grid" d="M${t[1]} 544V1500"/>`; });
out += '<path class="grid" d="M2157 544V1500"/>';

// volume + candles
candles.forEach((c, i) => {
  const x = startX + i * step;
  const dir = c[4] ? 'up' : 'down';
  out += `<rect class="vol ${dir}" x="${x - 5}" y="${c[5]}" width="10" height="${1500 - c[5]}"/>`;
});
candles.forEach((c, i) => {
  const x = startX + i * step;
  const dir = c[4] ? 'up' : 'down';
  out += `<rect class="${dir}" opacity=".8" x="${x - 1}" y="${c[2]}" width="2" height="${c[3] - c[2]}"/>`;
  out += `<rect class="${dir}" x="${x - 5}" y="${c[0]}" width="10" height="${c[1] - c[0]}"/>`;
});

// last price line
out += '<path d="M522 1199H2161" stroke="#f23645" stroke-opacity=".8" stroke-width="2" stroke-dasharray="2 4"/>';

// price axis
labelY.forEach((y, i) => {
  if (i === 10) return;
  const price = (78600 - i * 100).toLocaleString('en-US') + '.00';
  text('axis', 2179, y, price, 119);
});
out += '<rect x="2164" y="1182" width="146" height="34" rx="3" fill="#f23645"/>';
out += '<text x="2179" y="1206" textLength="118" font-size="24" font-weight="500" fill="#fbd0d4">77,611.31</text>';
out += '<rect x="2164" y="1468" width="40" height="32" rx="3" fill="#ef5350"/>';
out += '<text x="2178" y="1494" font-size="24" font-weight="500" fill="#fde4e4">7</text>';

// time axis
times.forEach(t => text(t[0] === '25' ? 'axis day' : 'axis', t[1] - 0.5, 1538, t[0], t[0] === '25' ? 31 : 66, 'middle'));
text('axis', 2123, 1538, '11:', 36);
out += '<path d="M2226 1529l7.500-13h15l7.500 13-7.500 13h-15z" fill="none" stroke="#b4b4b8" stroke-width="2.500"/>';
out += '<circle cx="2241" cy="1529" r="4.500" fill="none" stroke="#b4b4b8" stroke-width="2.500"/>';

// symbol and OHLC
text('name', 1159, 588, 'Bitcoin / TetherUS · 15 · Binance', 0, 'end');
out += '<circle cx="1194" cy="576" r="18" fill="#12302f"/><circle cx="1194" cy="576" r="8" fill="#45c4b0"/>';
[['O', 1227, '77,643.38', 1250, 128], ['H', 1390, '77,660.05', 1412, 128], ['L', 1551, '77,611.30', 1566, 131],
  ['C', 1709, '77,611.31', 1729, 130]].forEach(v => {
  text('key', v[1], 586, v[0]);
  text('val', v[3], 586, v[2], v[4]);
});
text('val', 1869, 586, '−32.06', 91);
text('val', 1967, 586, '(−0.04%)', 115);

document.getElementById('plot').innerHTML = out;
```
